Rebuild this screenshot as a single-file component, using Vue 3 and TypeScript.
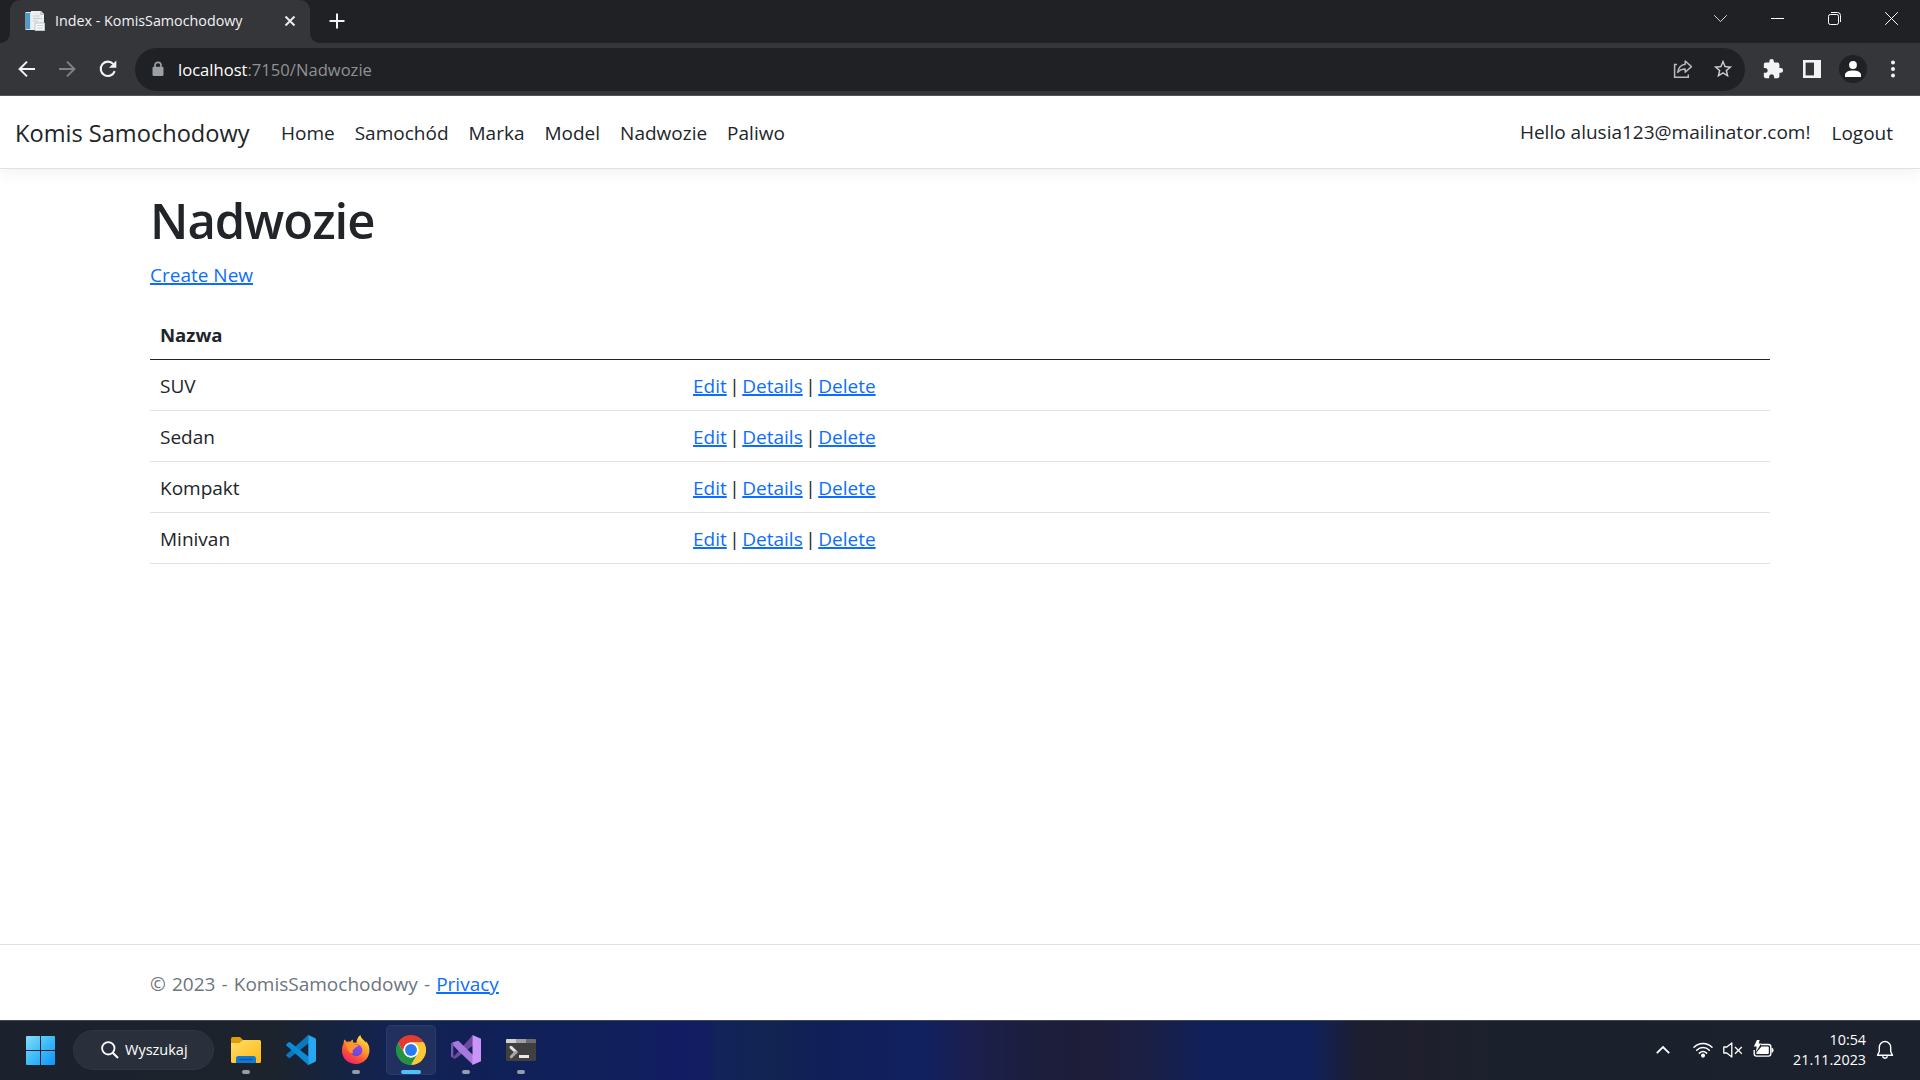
<script setup lang="ts">
const navLinks: string[] = ['Home', 'Samochód', 'Marka', 'Model', 'Nadwozie', 'Paliwo']
const bodyTypes: string[] = ['SUV', 'Sedan', 'Kompakt', 'Minivan']
</script>

<template>
  <div class="screen">
    <div class="tabstrip">
      <div class="tab">
        <svg class="favicon" width="20" height="20" viewBox="0 0 20 20">
          <path d="M0.5 1h9v18h-9z" fill="#d9e4ec" />
          <path d="M1 2h4v16H1z" fill="#4a9cd0" />
          <path d="M6 0h10l3 3v16H6z" fill="#eceef1" />
          <path d="M15 0v4h4z" fill="#c3c9d0" />
          <path d="M8 5h7M8 7.5h9M8 10h5" stroke="#c6ccd3" />
          <path d="M10 12h9.5v7.5H10z" fill="#f7f8f9" stroke="#bfc5cc" />
          <path d="M12 14.5h6M12 17h6" stroke="#ccd1d6" />
        </svg>
        <span class="tab-title">Index - KomisSamochodowy</span>
        <svg class="tab-close" width="12" height="12" viewBox="0 0 12 12">
          <path d="M1.5 1.5l9 9M10.5 1.5l-9 9" stroke="#e8eaed" stroke-width="2" />
        </svg>
      </div>
      <svg class="new-tab" width="16" height="16" viewBox="0 0 16 16">
        <path d="M8 0.5v15M0.5 8h15" stroke="#f1f3f4" stroke-width="2" />
      </svg>
      <div class="window-buttons">
        <svg width="15" height="15" viewBox="0 0 15 15"><path d="M1.2 4.2l6.3 6.4 6.3-6.4" fill="none" stroke="#d7d8da" /></svg>
        <svg width="15" height="15" viewBox="0 0 15 15"><path d="M1 7.5h13" stroke="#fff" /></svg>
        <svg width="15" height="15" viewBox="0 0 15 15" fill="none" stroke="#fff">
          <rect x="1.5" y="3.5" width="10" height="10" rx="1.8" />
          <path d="M4 1.5h6.5a3 3 0 0 1 3 3V11" />
        </svg>
        <svg width="15" height="15" viewBox="0 0 15 15"><path d="M1.2 1.2l12.6 12.6M13.8 1.2L1.2 13.8" stroke="#fff" /></svg>
      </div>
    </div>

    <div class="toolbar">
      <svg class="nav-icon" width="20" height="20" viewBox="0 0 20 20" fill="none" stroke="#f1f3f4" stroke-width="2">
        <path d="M18 10H3M10 2.6L2.6 10l7.4 7.4" />
      </svg>
      <svg class="nav-icon" width="20" height="20" viewBox="0 0 20 20" fill="none" stroke="#808185" stroke-width="2">
        <path d="M2 10h15M10 2.6l7.4 7.4-7.4 7.4" />
      </svg>
      <svg class="nav-icon" width="20" height="20" viewBox="0 0 20 20">
        <path d="M16.7 12.2A7.2 7.2 0 1 1 15.2 4.9" fill="none" stroke="#f1f3f4" stroke-width="2.1" />
        <path d="M18.3 1.4v7.3H11z" fill="#f1f3f4" />
      </svg>
      <div class="omnibox">
        <svg class="lock" width="12" height="16" viewBox="0 0 12 16">
          <path d="M3 6.5V4.3a3 3 0 0 1 6 0v2.2" fill="none" stroke="#9aa0a6" stroke-width="1.7" />
          <rect x="0.5" y="5.8" width="11" height="9.2" rx="1.3" fill="#9aa0a6" />
        </svg>
        <span class="url"><b>localhost</b>:7150/Nadwozie</span>
        <svg class="share" width="20" height="20" viewBox="0 0 20 20" fill="none" stroke="#b9babc" stroke-width="1.5">
          <path d="M4 5.5H1.6v12.7h13.7v-2.8" />
          <path d="M12.2 2l6.2 5.6-6.2 5.6v-3.3c-3.4 0-5.7 1-7.4 3.5.5-4.2 2.9-7.4 7.4-8.1z" stroke-linejoin="round" />
        </svg>
        <svg class="star" width="22" height="22" viewBox="0 0 24 24">
          <path fill="#cdced0" d="M22 9.24l-7.19-.62L12 2 9.19 8.63 2 9.24l5.46 4.73L5.82 21 12 17.27 18.18 21l-1.63-7.03L22 9.24zM12 15.4l-3.76 2.27 1-4.28-3.32-2.88 4.38-.38L12 6.1l1.71 4.04 4.38.38-3.32 2.88 1 4.28L12 15.4z" />
        </svg>
      </div>
      <div class="actions">
        <svg width="22" height="22" viewBox="0 0 24 24">
          <path fill="#f1f3f4" d="M20.5 11H19V7c0-1.1-.9-2-2-2h-4V3.5a2.5 2.5 0 0 0-5 0V5H4c-1.1 0-1.99.9-1.99 2v3.8H3.5c1.49 0 2.7 1.21 2.7 2.7s-1.21 2.7-2.7 2.7H2V20c0 1.1.9 2 2 2h3.8v-1.5c0-1.49 1.21-2.7 2.7-2.7s2.7 1.21 2.7 2.7V22H17c1.1 0 2-.9 2-2v-4h1.5a2.5 2.5 0 0 0 0-5z" />
        </svg>
        <svg class="panel" width="18" height="18" viewBox="0 0 18 18">
          <path d="M0 0h18v18H0z" fill="#f1f3f4" /><path d="M2.6 2.6h8.4v12.8H2.6z" fill="#35363a" />
        </svg>
        <span class="avatar">
          <svg width="16" height="16" viewBox="0 0 16 16" fill="#fff">
            <circle cx="8" cy="4" r="3.9" /><path d="M0 16v-2.2C0 10.8 4 9.4 8 9.4s8 1.4 8 4.4V16z" />
          </svg>
        </span>
        <svg class="dots" width="4" height="18" viewBox="0 0 4 18" fill="#f1f3f4">
          <circle cx="2" cy="2.5" r="2" /><circle cx="2" cy="9" r="2" /><circle cx="2" cy="15.5" r="2" />
        </svg>
      </div>
    </div>

    <div class="page">
      <header class="navbar">
        <a class="brand">Komis Samochodowy</a>
        <nav class="links">
          <a v-for="link in navLinks" :key="link">{{ link }}</a>
        </nav>
        <div class="account">
          <span class="hello">Hello alusia123@mailinator.com!</span>
          <a>Logout</a>
        </div>
      </header>

      <main class="container">
        <h1>Nadwozie</h1>
        <p class="create"><a class="link">Create New</a></p>
        <table>
          <thead>
            <tr><th>Nazwa</th><th></th></tr>
          </thead>
          <tbody>
            <tr v-for="name in bodyTypes" :key="name">
              <td>{{ name }}</td>
              <td class="ops"><a class="link">Edit</a> | <a class="link">Details</a> | <a class="link">Delete</a></td>
            </tr>
          </tbody>
        </table>
      </main>

      <footer class="footer">
        <div class="container foot-text">© 2023 - KomisSamochodowy - <a class="link">Privacy</a></div>
      </footer>
    </div>

    <div class="taskbar">
      <svg class="start" width="29" height="29" viewBox="0 0 29 29">
        <defs>
          <linearGradient id="win" gradientUnits="userSpaceOnUse" x1="0" y1="0" x2="29" y2="29">
            <stop offset="0" stop-color="#86dcfc" /><stop offset=".5" stop-color="#3cbcf9" /><stop offset="1" stop-color="#0f93fb" />
          </linearGradient>
        </defs>
        <path d="M1 0h13v14H0V1a1 1 0 0 1 1-1zM15 0h13a1 1 0 0 1 1 1v13H15zM0 15h14v14H1a1 1 0 0 1-1-1zM15 15h14v13a1 1 0 0 1-1 1H15z" fill="url(#win)" />
      </svg>
      <div class="search">
        <svg width="18" height="18" viewBox="0 0 18 18" fill="none" stroke="#fff" stroke-width="1.8">
          <circle cx="7.3" cy="7.3" r="6.2" /><path d="M11.7 11.7l5.3 5.3" stroke-width="2" />
        </svg>
        <span>Wyszukaj</span>
      </div>

      <div class="apps">
        <div class="app running">
          <svg width="30" height="30" viewBox="0 0 30 30">
            <defs>
              <linearGradient id="folder" x1="0" y1="0" x2="1" y2="1"><stop offset="0" stop-color="#ffdc6b" /><stop offset="1" stop-color="#fdb916" /></linearGradient>
            </defs>
            <path d="M0 4a2 2 0 0 1 2-2h7l3 3v4H0z" fill="#e09c08" />
            <path d="M0 8h8.5L12 5h16.500A1.500 1.500 0 0 1 30 6.500v20a1.500 1.500 0 0 1-1.500 1.500h-27A1.500 1.500 0 0 1 0 26.500z" fill="url(#folder)" />
            <path d="M5 28v-5.500A2.500 2.500 0 0 1 7.500 21h15a2.500 2.500 0 0 1 2.500 2.500V28z" fill="#1079d2" />
            <path d="M8.500 24.500h13" stroke="#0b549c" stroke-width="1.200" />
          </svg>
        </div>
        <div class="app">
          <svg width="30" height="30" viewBox="0 0 30 30">
            <path d="M22 0.200L0.600 19.200a1.200 1.200 0 0 0 0 1.800l2 1.700a1.200 1.200 0 0 0 1.500 0L23 8z" fill="#0b77bd" />
            <path d="M22 29.800L0.600 10.800a1.200 1.200 0 0 1 0-1.800l2-1.700a1.200 1.200 0 0 1 1.500 0L23 22z" fill="#0c8ad7" />
            <path d="M22.200 0l6.700 3.100A2 2 0 0 1 30 4.900v20.200a2 2 0 0 1-1.100 1.800L22.200 30a1.800 1.800 0 0 1-1-.3c.6.4 1.100 0 1.100-.9V1.200c0-.9-.6-1.200-1.100-.9z" fill="#25a7f1" />
          </svg>
        </div>
        <div class="app running">
          <svg width="30" height="30" viewBox="0 0 30 30">
            <defs>
              <linearGradient id="fox" x1=".8" y1=".05" x2=".25" y2=".95"><stop offset="0" stop-color="#ffe23f" /><stop offset=".4" stop-color="#ff9a2a" /><stop offset=".75" stop-color="#ff4a3d" /><stop offset="1" stop-color="#f0246d" /></linearGradient>
              <linearGradient id="globe" x1=".7" y1="0" x2=".3" y2="1"><stop offset="0" stop-color="#a63ff0" /><stop offset="1" stop-color="#5a4ecb" /></linearGradient>
            </defs>
            <path d="M3.200 4.500c1 .5 2 1.500 2.600 2.400C7 6.500 8.200 6.400 9.300 6.700c.7-1 1.700-1.800 2.900-2.200-.5.900-.5 2 0 2.900l3.300.3c.1-3 1.300-5.800 3.900-7.700.2 2.600 2.200 4 3.900 5.700.8.700 1.100 1.400 1.500 2.200V6c3 3 4 6.700 3.600 10.800C27.600 24 22 29 15 29 7.500 29 1.300 23.800 1 16.200.9 13 1.500 10.500 2.600 8.500c0-1.400.2-2.700.6-4z" fill="url(#fox)" />
            <circle cx="15.300" cy="15.200" r="6" fill="url(#globe)" />
            <path d="M5.500 9.500c2.200-1.600 5-1.300 6.800.2 1.200-.3 3.300 0 4.700.4.600 1.300-1 2.100-2.700 2.400-.4 1.400-1.600 1.700-2.300 2.300-.6 1.300-.6 2.600.1 3.700-3.800-.2-6.600-4-6.600-9z" fill="#ff962b" />
          </svg>
        </div>
        <div class="app active">
          <svg width="30" height="30" viewBox="0 0 48 48">
            <circle cx="24" cy="24" r="23" fill="#fff" />
            <path d="M3.215 12A24 24 0 0 1 44.785 12H24a12 12 0 0 0-10.392 18z" fill="#e33b2e" />
            <path d="M44.785 12A24 24 0 0 1 24 48l10.392-18A12 12 0 0 0 24 12z" fill="#fcc934" />
            <path d="M24 48A24 24 0 0 1 3.215 12l10.393 18a12 12 0 0 0 20.784 0z" fill="#229342" />
            <circle cx="24" cy="24" r="12" fill="#fff" /><circle cx="24" cy="24" r="9.500" fill="#2a7af0" />
          </svg>
        </div>
        <div class="app running">
          <svg width="30" height="30" viewBox="0 0 30 30">
            <path d="M2 22.600L21.500 0.200 22 10.500 5 23.300a1.800 1.800 0 0 1-2.200.1z" fill="#6b4a9f" />
            <path d="M0 8.500l2.500-1.700v16.400L0 21.500z" fill="#7a55b5" />
            <path d="M2 7.200l4.200-1.300a2 2 0 0 1 2 .5L22 20v9.800L7 15.500 2.500 11z" fill="#a878dc" />
            <path d="M2.500 11v8.500l4-4.200z" fill="#1a2458" />
            <path d="M21.500 0L30 3.800v22.400L21.500 30z" fill="#c995f8" />
          </svg>
        </div>
        <div class="app running">
          <svg width="30" height="30" viewBox="0 0 30 30">
            <rect y="4" width="30" height="22" rx="1.500" fill="#404040" />
            <path d="M1 4h9v4H0V5a1 1 0 0 1 1-1z" fill="#d2d2d2" /><path d="M10 4h10v4H10z" fill="#a0a0a0" /><path d="M20 4h9a1 1 0 0 1 1 1v3H20z" fill="#6c6c6c" />
            <path d="M5 12.300l5 4.700" fill="none" stroke="#e3e3e3" stroke-width="3" stroke-linecap="round" />
            <path d="M10 17l-4.700 4.800" fill="none" stroke="#a8a8a8" stroke-width="3" stroke-linecap="round" />
            <path d="M13 20h10v3H13z" fill="#e8e8e8" />
          </svg>
        </div>
      </div>

      <div class="tray">
        <svg class="chev" width="16" height="16" viewBox="0 0 16 16"><path d="M1.800 11.200L8 5l6.200 6.200" fill="none" stroke="#fff" stroke-width="1.800" /></svg>
        <svg class="wifi" width="20" height="16" viewBox="0 0 20 16" fill="none" stroke="#fff" stroke-width="1.500" stroke-linecap="round">
          <path d="M1 5.300c5-5 13-5 18 0M3.700 8.300c3.600-3.600 9-3.600 12.600 0M6.400 11.100c2.100-2.100 5.100-2.100 7.200 0" /><circle cx="10" cy="13.600" r="1.300" fill="#fff" />
        </svg>
        <svg class="vol" width="20" height="16" viewBox="0 0 20 16" fill="none" stroke="#fff" stroke-width="1.300" stroke-linejoin="round">
          <path d="M0.800 5h3l5-4v14l-5-4h-3z" /><path d="M12 5l6.800 6.800M18.800 5L12 11.800" />
        </svg>
        <svg class="bat" width="21" height="18" viewBox="0 0 21 18">
          <path d="M8 4.500h7.500a2.300 2.300 0 0 1 2.300 2.300v7a2.300 2.300 0 0 1-2.300 2.300H3.500a2.300 2.300 0 0 1-2.300-2.300V10" fill="none" stroke="#fff" stroke-width="1.400" />
          <path d="M8.500 6.500h6.300a1 1 0 0 1 1 1v5.600a1 1 0 0 1-1 1H4.200a1 1 0 0 1-.9-1.300z" fill="#fff" />
          <path d="M18.500 7.800c1.500.3 2 .9 2 2.500s-.5 2.200-2 2.500z" fill="#fff" />
          <path d="M4 0h2.600L5.700 3.500h2.500L3 12l.7-5.500H.8z" fill="#fff" />
        </svg>
        <div class="clock"><span>10:54</span><span>21.11.2023</span></div>
        <svg class="bell" width="18" height="20" viewBox="0 0 18 20" fill="none" stroke="#fff" stroke-width="1.400" stroke-linejoin="round">
          <path d="M9 1.500a5.700 5.700 0 0 0-5.700 5.700v4.300L1.500 15.200h15l-1.800-3.700V7.200A5.700 5.700 0 0 0 9 1.500z" /><path d="M6.500 16.300a2.600 2.600 0 0 0 5 0" />
        </svg>
      </div>
    </div>
  </div>
</template>

<style scoped>
.screen {
  width: 1920px;
  height: 1080px;
  overflow: hidden;
  display: flex;
  flex-direction: column;
  font-family: "Open Sans", "Noto Sans", sans-serif;
  font-size: 19px;
  line-height: 30px;
  color: #212529;
  background: #fff;
}
svg { display: block; flex: none; }

.tabstrip { height: 43px; flex: none; display: flex; background: #202124; }
.tab {
  width: 300px;
  height: 43px;
  margin-left: 10px;
  box-sizing: border-box;
  padding: 0 15px 1px;
  display: flex;
  align-items: center;
  border-radius: 10px 10px 0 0;
  background: #35363a;
  color: #f1f3f4;
  position: relative;
}
.tab::before, .tab::after {
  content: "";
  position: absolute;
  bottom: 0;
  width: 10px;
  height: 10px;
}
.tab::before { left: -10px; background: radial-gradient(circle at 0 0, #202124 9.5px, #35363a 10.5px); }
.tab::after { right: -10px; background: radial-gradient(circle at 100% 0, #202124 9.5px, #35363a 10.5px); }
.tab-title { font-size: 14.3px; line-height: 20px; margin-left: 10px; white-space: nowrap; }
.tab-close { margin-left: auto; margin-right: -1px; }
.new-tab { margin: 13px 0 0 19px; }
.window-buttons { margin: 11px 21px 0 auto; display: flex; gap: 42px; }

.toolbar {
  height: 53px;
  flex: none;
  box-sizing: border-box;
  border-bottom: 1px solid #55565a;
  padding: 0 25px 0 17px;
  display: flex;
  align-items: center;
  background: #35363a;
}
.nav-icon { margin-right: 20px; }
.nav-icon:nth-child(3) { margin: 0 19px 0 1px; }
.omnibox {
  width: 1610px;
  height: 43px;
  margin-left: -2px;
  box-sizing: border-box;
  padding: 0 11px 0 17px;
  border-radius: 22px;
  display: flex;
  align-items: center;
  background: #202124;
}
.url { margin: 2px 0 0 14px; font-size: 16.6px; line-height: 24px; color: #8f9194; white-space: nowrap; }
.url b { font-weight: 400; color: #fff; }
.share { margin-left: auto; }
.star { margin-left: 19px; }
.actions { flex: 1; display: flex; align-items: center; margin-left: 17px; }
.panel { margin-left: 19px; }
.avatar {
  width: 28px;
  height: 28px;
  margin-left: 18px;
  border-radius: 50%;
  display: flex;
  align-items: center;
  justify-content: center;
  background: #202124;
}
.dots { margin-left: auto; }

.page { height: 924px; flex: none; display: flex; flex-direction: column; }
.navbar {
  height: 73px;
  flex: none;
  box-sizing: border-box;
  margin-bottom: 20px;
  padding: 2px 27px 0 15px;
  display: flex;
  align-items: center;
  border-bottom: 1px solid #dee2e6;
  box-shadow: 0 5px 15px rgba(0, 0, 0, .05);
}
.brand { width: 246px; font-size: 23.6px; white-space: nowrap; }
.links { display: flex; gap: 20px; margin-left: 20px; }
.account { display: flex; margin-left: auto; }
.hello { margin: -1px 21px 0 0; }

.container { width: 1620px; margin: 0 auto; }
h1 {
  margin: 0 0 10px;
  height: 60px;
  box-sizing: border-box;
  padding-top: 1px;
  font-size: 49px;
  font-weight: 600;
  line-height: 60px;
  letter-spacing: -1px;
}
.create { height: 30px; box-sizing: border-box; padding-top: 1px; margin: 0 0 20px; }
.link {
  color: #0d6efd;
  text-decoration: underline;
  text-decoration-thickness: 2px;
  text-underline-offset: 1px;
}
table { width: 1620px; border-collapse: separate; border-spacing: 0; table-layout: fixed; }
th, td { height: 30px; padding: 11px 10px 9px; border-bottom: 1px solid #dee2e6; text-align: left; }
th { font-weight: 700; font-size: 18.6px; border-color: #212529; }
th:first-child { width: 512px; }
.ops { padding-left: 11px; word-spacing: -2.4px; }

.footer { height: 76px; margin-top: auto; box-sizing: border-box; border-top: 1px solid #dee2e6; color: #6c757d; }
.foot-text { padding-top: 24px; word-spacing: 1.2px; }

.taskbar {
  height: 60px;
  flex: none;
  box-sizing: border-box;
  border-top: 1px solid #3f4853;
  padding: 0 32px 1px 26px;
  display: flex;
  align-items: center;
  color: #fff;
  background: linear-gradient(90deg, #1b222d 0, #1c232d 275px, #152340 335px, #122354 400px, #102058 500px, #11205c 627px, #121c62 673px, #121d62 703px, #11235a 717px, #122450 773px, #111f58 817px, #112060 923px, #1b1f4c 973px, #1c1e3c 1040px, #1e1d3a 1097px, #1a2045 1150px, #10205a 1204px, #10205a 1311px, #1c1f30 1357px, #1f1f2d 1418px, #1b212c 1495px, #1c222d 1920px);
}
.search {
  width: 141px;
  height: 40px;
  margin-left: 18px;
  box-sizing: border-box;
  padding-left: 27px;
  border: 1px solid #303641;
  border-radius: 20px;
  display: flex;
  align-items: center;
  gap: 6px;
  background: #2a303b;
  font-size: 14.5px;
}
.apps { display: flex; gap: 5px; margin-left: 7px; }
.app {
  width: 50px;
  height: 50px;
  box-sizing: border-box;
  border-radius: 5px;
  display: flex;
  align-items: center;
  justify-content: center;
  position: relative;
}
.app.active { background: #21305f; box-shadow: inset 0 0 0 1px #2b3a67; }
.app.running::after, .app.active::after {
  content: "";
  position: absolute;
  left: 21px;
  bottom: 1px;
  width: 8px;
  height: 4px;
  border-radius: 2px;
  background: #969bac;
}
.app.active::after { left: 15px; width: 20px; background: #4cc2ff; }
.tray { display: flex; align-items: center; margin-left: auto; margin-right: -6px; }
.wifi { margin-left: 22px; }
.vol { margin-left: 10px; }
.bat { margin: -2px 0 0 10px; }
.clock { width: 92px; display: flex; flex-direction: column; align-items: flex-end; font-size: 14.3px; line-height: 20px; }
.bell { margin-left: 10px; }
</style>
